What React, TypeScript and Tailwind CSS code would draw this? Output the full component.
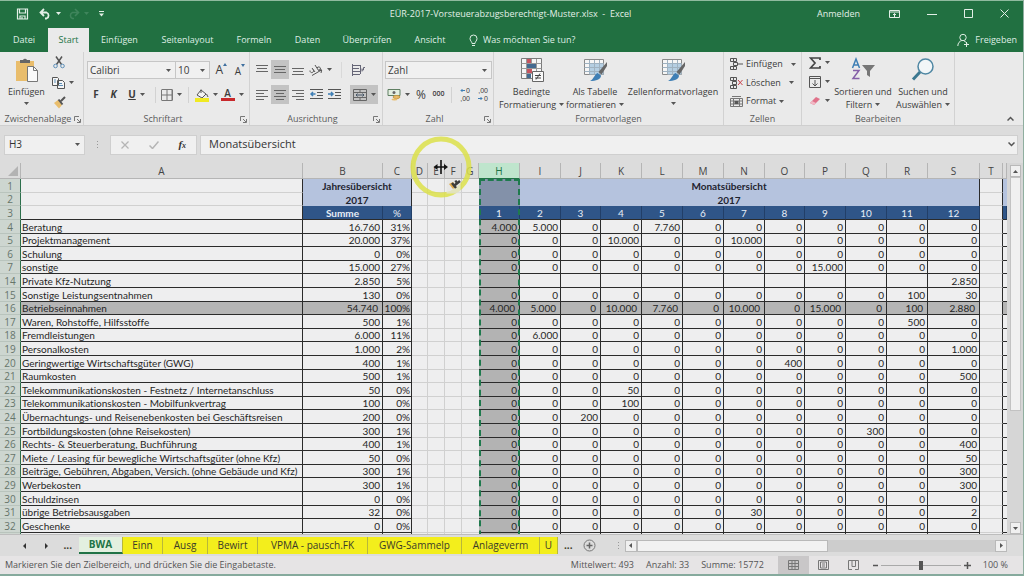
import React, { useState } from 'react';

interface SheetRow {
    no: number;
    label: string;
    sum: string;
    pct: string;
    months: string[];
}

const zeros = Array(12).fill('0');
const blanks = Array(12).fill('');

function months(values: Record<number, string>, base: string[] = zeros) {
    return base.map((v, i) => values[i + 1] ?? v);
}

const rows: SheetRow[] = [
    { no: 4, label: 'Beratung', sum: '16.760', pct: '31%', months: months({ 1: '4.000', 2: '5.000', 5: '7.760' }) },
    { no: 5, label: 'Projektmanagement', sum: '20.000', pct: '37%', months: months({ 4: '10.000', 7: '10.000' }) },
    { no: 6, label: 'Schulung', sum: '0', pct: '0%', months: zeros },
    { no: 7, label: 'sonstige', sum: '15.000', pct: '27%', months: months({ 9: '15.000' }) },
    { no: 14, label: 'Private Kfz-Nutzung', sum: '2.850', pct: '5%', months: months({ 12: '2.850' }, blanks) },
    { no: 15, label: 'Sonstige Leistungsentnahmen', sum: '130', pct: '0%', months: months({ 11: '100', 12: '30' }) },
    { no: 16, label: 'Betriebseinnahmen', sum: '54.740', pct: '100%', months: months({ 1: '4.000', 2: '5.000', 4: '10.000', 5: '7.760', 7: '10.000', 9: '15.000', 11: '100', 12: '2.880' }) },
    { no: 17, label: 'Waren, Rohstoffe, Hilfsstoffe', sum: '500', pct: '1%', months: months({ 11: '500' }) },
    { no: 18, label: 'Fremdleistungen', sum: '6.000', pct: '11%', months: months({ 2: '6.000' }) },
    { no: 19, label: 'Personalkosten', sum: '1.000', pct: '2%', months: months({ 12: '1.000' }) },
    { no: 20, label: 'Geringwertige Wirtschaftsgüter (GWG)', sum: '400', pct: '1%', months: months({ 8: '400' }) },
    { no: 21, label: 'Raumkosten', sum: '500', pct: '1%', months: months({ 12: '500' }) },
    { no: 22, label: 'Telekommunikationskosten - Festnetz / Internetanschluss', sum: '50', pct: '0%', months: months({ 4: '50' }) },
    { no: 23, label: 'Telekommunikationskosten - Mobilfunkvertrag', sum: '100', pct: '0%', months: months({ 4: '100' }) },
    { no: 24, label: 'Übernachtungs- und Reisenebenkosten bei Geschäftsreisen', sum: '200', pct: '0%', months: months({ 3: '200' }) },
    { no: 25, label: 'Fortbildungskosten (ohne Reisekosten)', sum: '300', pct: '1%', months: months({ 10: '300' }) },
    { no: 26, label: 'Rechts- & Steuerberatung, Buchführung', sum: '400', pct: '1%', months: months({ 12: '400' }) },
    { no: 27, label: 'Miete / Leasing für bewegliche Wirtschaftsgüter (ohne Kfz)', sum: '50', pct: '0%', months: months({ 12: '50' }) },
    { no: 28, label: 'Beiträge, Gebühren, Abgaben, Versich. (ohne Gebäude und Kfz)', sum: '300', pct: '1%', months: months({ 12: '300' }) },
    { no: 29, label: 'Werbekosten', sum: '300', pct: '1%', months: months({ 12: '300' }) },
    { no: 30, label: 'Schuldzinsen', sum: '0', pct: '0%', months: zeros },
    { no: 31, label: 'übrige Betriebsausgaben', sum: '32', pct: '0%', months: months({ 7: '30', 12: '2' }) },
    { no: 32, label: 'Geschenke', sum: '0', pct: '0%', months: zeros },
    { no: 33, label: '', sum: '', pct: '', months: blanks },
];

const columns = [
    { id: 'A', width: 'w-[282px]' },
    { id: 'B', width: 'w-[80px]' },
    { id: 'C', width: 'w-[29px]' },
    { id: 'D', width: 'w-[16px]' },
    { id: 'E', width: 'w-[17px]' },
    { id: 'F', width: 'w-[17px]' },
    { id: 'G', width: 'w-[17px]' },
    { id: 'H', width: 'w-[41px]' },
    { id: 'I', width: 'w-[41px]' },
    { id: 'J', width: 'w-[40px]' },
    { id: 'K', width: 'w-[41px]' },
    { id: 'L', width: 'w-[41px]' },
    { id: 'M', width: 'w-[41px]' },
    { id: 'N', width: 'w-[41px]' },
    { id: 'O', width: 'w-[40px]' },
    { id: 'P', width: 'w-[41px]' },
    { id: 'Q', width: 'w-[41px]' },
    { id: 'R', width: 'w-[41px]' },
    { id: 'S', width: 'w-[52px]' },
    { id: 'T', width: 'w-[23px]' },
    { id: '', width: 'w-[4px]' },
];

// 13.6px row pitch, kept on whole pixels
const rowHeight = (i: number) => (i % 5 === 1 || i % 5 === 4 ? 'h-[13px]' : 'h-[14px]');

const ribbonTabs = [
    { name: 'Datei', width: 'w-[48px]' },
    { name: 'Start', width: 'w-[41px]' },
    { name: 'Einfügen', width: 'w-[61px]' },
    { name: 'Seitenlayout', width: 'w-[75px]' },
    { name: 'Formeln', width: 'w-[58px]' },
    { name: 'Daten', width: 'w-[49px]' },
    { name: 'Überprüfen', width: 'w-[70px]' },
    { name: 'Ansicht', width: 'w-[56px]' },
];

const sheetTabs = [
    { name: 'BWA', width: 'w-[44px]' },
    { name: 'Einn', width: 'w-[40px]' },
    { name: 'Ausg', width: 'w-[45px]' },
    { name: 'Bewirt', width: 'w-[50px]' },
    { name: 'VPMA - pausch.FK', width: 'w-[110px]' },
    { name: 'GWG-Sammelp', width: 'w-[94px]' },
    { name: 'Anlageverm', width: 'w-[78px]' },
    { name: 'U', width: 'w-[18px]' },
];

function Caret({ className = 'text-[#555]' }: { className?: string }) {
    return (
        <svg viewBox="0 0 5 3" className={`w-[5px] h-[3px] shrink-0 ${className}`} fill="currentColor" aria-hidden="true">
            <path d="M0 0h5L2.5 3z" />
        </svg>
    );
}

function Icon({ w = 14, h = 14, children }: { w?: number, h?: number, children: React.ReactNode }) {
    return (
        <svg width={w} height={h} viewBox={`0 0 ${w} ${h}`} fill="none" stroke="#555" className="shrink-0" aria-hidden="true">
            {children}
        </svg>
    );
}

function Tool({ label, width, active, children }: { label: string, width: string, active?: boolean, children: React.ReactNode }) {
    return (
        <button aria-label={label} title={label} className={`flex items-center justify-center gap-1 h-[19px] shrink-0 ${width} ${active ? 'bg-[#c3c3c3]' : ''}`}>
            {children}
        </button>
    );
}

function Group({ label, width, launcher, children }: { label: string, width: string, launcher?: boolean, children: React.ReactNode }) {
    return (
        <section className={`flex flex-col shrink-0 border-r border-[#d2d2d2] ${width}`}>
            <div className="h-[61px] flex">{children}</div>
            <div className="h-3 flex items-center px-[2px]">
                <h2 className="flex-1 text-center text-[9px] leading-3 text-[#5a5a5a] whitespace-nowrap">{label}</h2>
                {launcher && (
                    <button aria-label={`${label} öffnen`}>
                        <Icon w={7} h={7}>
                            <path d="M.5 5V.5H5M3 3l3 3M6.500 3v3.500H3" stroke="#777" />
                        </Icon>
                    </button>
                )}
            </div>
        </section>
    );
}

function TitleBar() {
    return (
        <div className="h-7 flex items-center border-t border-[#8fbb9f] pb-[2px] text-[#e3efe7]">
            <div className="flex-1 flex items-center pl-[16px]">
                <button aria-label="Speichern">
                    <Icon w={13} h={12}>
                        <path d="M1.500 1h10v10h-10zM3.500 1v4h6V1M4 11V8h5v3M6 9v2" stroke="#e3efe7" strokeWidth="1.200" />
                    </Icon>
                </button>
                <button aria-label="Rückgängig" className="flex items-center gap-1 ml-[10px]">
                    <Icon w={13} h={12}>
                        <path d="M5 1L1.500 4.500 5 8M2 4.500h5.500a3.200 3.200 0 0 1 0 6H6" stroke="#e3efe7" strokeWidth="1.800" />
                    </Icon>
                    <Caret className="text-[#e3efe7]" />
                </button>
                <button aria-label="Wiederholen" className="flex items-center gap-1 ml-[6px]" disabled>
                    <Icon w={13} h={12}>
                        <path d="M8 1l3.500 3.500L8 8M11 4.500H5.500a3.200 3.200 0 0 0 0 6H7" stroke="#3f855c" strokeWidth="1.600" />
                    </Icon>
                    <Caret className="text-[#3f855c]" />
                </button>
                <button aria-label="Symbolleiste anpassen" className="ml-[10px]">
                    <Icon w={5} h={6}>
                        <path d="M0 .5h5" stroke="#e3efe7" />
                        <path d="M0 2.500h5L2.500 5.500z" fill="#e3efe7" stroke="none" />
                    </Icon>
                </button>
            </div>
            <h1 className="text-[9px] whitespace-pre pr-1">EÜR-2017-Vorsteuerabzugsberechtigt-Muster.xlsx  -  Excel</h1>
            <div className="flex-1 flex items-center justify-end gap-[27px] pr-[14px]">
                <button className="text-[9px] mr-[2px]">Anmelden</button>
                <button aria-label="Menüband-Anzeigeoptionen">
                    <Icon w={11} h={8}>
                        <path d="M.5.5h10v7H.5zM1 2h9M5.500 7V3.500M4 5l1.500-1.500L7 5" stroke="#e3efe7" />
                    </Icon>
                </button>
                <button aria-label="Minimieren">
                    <Icon w={10} h={8}>
                        <path d="M0 4.500h10" stroke="#e3efe7" />
                    </Icon>
                </button>
                <button aria-label="Maximieren">
                    <Icon w={9} h={9}>
                        <path d="M.5.5h8v8h-8z" stroke="#e3efe7" />
                    </Icon>
                </button>
                <button aria-label="Schließen">
                    <Icon w={9} h={9}>
                        <path d="M.5.5l8 8M8.500.5l-8 8" stroke="#e3efe7" />
                    </Icon>
                </button>
            </div>
        </div>
    );
}

function RibbonTabs() {
    return (
        <nav className="h-6 flex items-stretch text-[9px] text-[#dfeee4]">
            {ribbonTabs.map(t => (
                <button key={t.name} className={`${t.width} shrink-0 text-center whitespace-nowrap ${t.name === 'Start' ? 'bg-[#eaeaea] text-[#217346]' : ''}`}>
                    {t.name}
                </button>
            ))}
            <label className="flex items-center gap-[5px] flex-1 pl-[11px]">
                <Icon w={9} h={13}>
                    <path d="M3 9.500C3 7.500 1 7 1 4.500a3.500 3.500 0 0 1 7 0C8 7 6 7.500 6 9.500zM3 11.500h3" stroke="#dfeee4" />
                </Icon>
                <input type="text" placeholder="Was möchten Sie tun?" aria-label="Was möchten Sie tun?" className="w-40 bg-transparent outline-none placeholder:text-[#dfeee4]" />
            </label>
            <button className="flex items-center gap-[6px] pr-[6px] whitespace-nowrap">
                <Icon w={12} h={14}>
                    <circle cx="6" cy="4.500" r="3.200" stroke="#dfeee4" />
                    <path d="M.8 13c0-3 2-5 4-5.500M7 8c1.500.5 2.500 1.500 3 2.500M7 11.500h5M9.500 9v5" stroke="#dfeee4" />
                </Icon>
                Freigeben
            </button>
        </nav>
    );
}

function AlignIcon({ d }: { d: string }) {
    return (
        <Icon w={12} h={11}>
            <path d={d} stroke="#666" />
        </Icon>
    );
}

function BrushOnTable() {
    return (
        <Icon w={26} h={26}>
            <path d="M2.500 2.500h19v15h-19z" fill="#f6f6f6" stroke="#8a8a8a" />
            <path d="M7.500 6.500h14v11h-14z" fill="#b5cfe3" stroke="none" />
            <path d="M2.500 6.500h19M2.500 10.500h19M2.500 14.500h19M7.500 3v14M12.500 3v14M17.500 3v14" stroke="#9fb2c1" />
            <path d="M25 5l-8.500 10 3 2.500L25 9z" fill="#666" stroke="none" />
            <path d="M15.500 16l3.500 2.500c0 4-5 5.500-11 5.500 4-2 4-6 7.500-8z" fill="#3f7fb5" stroke="none" />
        </Icon>
    );
}

function Ribbon() {
    return (
        <div className="h-[74px] flex bg-[#eaeaea] text-[9px] text-[#3c3c3c] border-b border-[#cfcfcf]">
            <Group label="Zwischenablage" width="w-[84px]" launcher>
                <button className="w-[53px] flex flex-col items-center pt-[5px]">
                    <Icon w={24} h={26}>
                        <path d="M1 4h18v20H1z" fill="#e9bd6c" stroke="none" />
                        <path d="M5 6V3h3a2.200 2.200 0 0 1 4 0h3v3z" fill="#666" stroke="none" />
                        <path d="M12.500 9.500h6l4 4v11h-10z" fill="#fafafa" stroke="#777" />
                        <path d="M18.500 9.500v4h4" stroke="#777" />
                    </Icon>
                    <span className="leading-[13px] mt-[2px]">Einfügen</span>
                    <span className="mt-1"><Caret /></span>
                </button>
                <div className="flex flex-col gap-[1px] pt-[1px]">
                    <Tool label="Ausschneiden" width="w-[11px]">
                        <Icon w={12} h={13}>
                            <path d="M3 .5l5.500 8M9 .5l-5.500 8" strokeWidth="1.500" />
                            <circle cx="2.500" cy="10" r="1.800" stroke="#5d8fb8" />
                            <circle cx="9.500" cy="10" r="1.800" stroke="#5d8fb8" />
                        </Icon>
                    </Tool>
                    <Tool label="Kopieren" width="w-[20px]">
                        <Icon w={13} h={12}>
                            <path d="M.5.5h5l1 1v7h-6zM5.500 3.500h5l2 2v6h-7z" fill="#f5f5f5" />
                            <path d="M2 3h2M2 5h2M7 6.500h3M7 8.500h4" stroke="#5d8fb8" />
                        </Icon>
                        <Caret />
                    </Tool>
                    <Tool label="Format übertragen" width="w-[12px]">
                        <Icon w={13} h={13}>
                            <path d="M1 7l4-3 4 5-3 3.500z" fill="#e9bd6c" stroke="none" />
                            <path d="M5.500 3.500l4 5M8 5l4-4" strokeWidth="2" />
                        </Icon>
                    </Tool>
                </div>
            </Group>

            <Group label="Schriftart" width="w-[166px]" launcher>
                <div className="flex flex-col flex-1 pl-[3px] pt-[9px]">
                    <div className="flex h-[18px]">
                        <button aria-label="Schriftart" className="w-[89px] flex items-center justify-between border border-[#c6c6c6] bg-[#f0f0f0] pl-[2px] pr-1 text-[10px]">
                            Calibri <Caret />
                        </button>
                        <button aria-label="Schriftgrad" className="w-[34px] flex items-center justify-between border border-l-0 border-[#c6c6c6] bg-[#f0f0f0] pl-[2px] pr-1 text-[10px]">
                            10 <Caret />
                        </button>
                        <button aria-label="Schrift vergrößern" className="w-[17px] flex justify-end text-[12px] leading-[18px]">
                            A
                            <Icon w={4} h={8}><path d="M0 5l2-3 2 3z" fill="#3f6f9f" stroke="none" /></Icon>
                        </button>
                        <button aria-label="Schrift verkleinern" className="w-[18px] flex justify-end text-[10px] leading-[20px]">
                            A
                            <Icon w={4} h={8}><path d="M0 3h4L2 6z" fill="#3f6f9f" stroke="none" /></Icon>
                        </button>
                    </div>
                    <div className="flex items-center mt-[6px]">
                        <Tool label="Fett" width="w-[18px]"><b className="text-[10px]">F</b></Tool>
                        <Tool label="Kursiv" width="w-[17px]"><b className="text-[10px] italic">K</b></Tool>
                        <Tool label="Unterstrichen" width="w-[29px]"><b className="text-[10px] underline">U</b><Caret /></Tool>
                        <span className="w-px h-4 bg-[#d2d2d2] ml-1" />
                        <Tool label="Rahmen" width="w-[30px]">
                            <Icon w={12} h={12}>
                                <path d="M1 .5h10v11H1M.5.5v11M11.500.5v11M6 1v10M1 6h10" stroke="#777" />
                            </Icon>
                            <Caret />
                        </Tool>
                        <span className="w-px h-4 bg-[#d2d2d2] ml-[2px] mr-1" />
                        <Tool label="Füllfarbe" width="w-[26px]">
                            <Icon w={14} h={14}>
                                <path d="M6 2l5 4-4 4-5-3z" fill="#f3f3f3" />
                                <path d="M6 5V1.500M11.500 6l1.500 3" />
                                <path d="M0 10h14v4H0z" fill="#f0ea23" stroke="none" />
                            </Icon>
                            <Caret />
                        </Tool>
                        <Tool label="Schriftfarbe" width="w-[26px]">
                            <span className="w-[14px] flex flex-col items-center border-b-3 border-[#c8282b] text-[10px] leading-[10px] font-semibold">A</span>
                            <Caret />
                        </Tool>
                    </div>
                </div>
            </Group>

            <Group label="Ausrichtung" width="w-[133px]" launcher>
                <div className="flex flex-col flex-1 pl-[3px] pt-[8px]">
                    <div className="flex items-center">
                        <Tool label="Oben" width="w-[18px]"><AlignIcon d="M0 1.500h12M1 4.500h10M0 7.500h12" /></Tool>
                        <Tool label="Mitte" width="w-[18px]" active><AlignIcon d="M0 2.500h12M1 5.500h10M0 8.500h12" /></Tool>
                        <Tool label="Unten" width="w-[17px]"><AlignIcon d="M0 4.500h12M1 7.500h10M0 10.500h12" /></Tool>
                        <Tool label="Drehen" width="w-[28px]">
                            <Icon w={14} h={12}>
                                <path d="M1 6.500a1.800 1.800 0 1 0 3-1M3 4l3 4M6 1l3.500 5.500M8 4a1.800 1.800 0 1 1 1.500 2.500M3 11.500l9.500-5.500M9.500 6h3.200L12 9" />
                            </Icon>
                            <Caret />
                        </Tool>
                        <span className="w-px h-4 bg-[#d9d9d9] ml-[7px] mr-[6px]" />
                        <Tool label="Textumbruch" width="w-[20px]">
                            <Icon w={13} h={12}>
                                <path d="M.5 0v12M1 1.500h8M1 4.500h6M1 7.500h8M1 10.500h7M8.500 1v9M10 6h1.500V3.500H13M10 4.500v3" stroke="#667" />
                            </Icon>
                        </Tool>
                    </div>
                    <div className="flex items-center mt-[6px]">
                        <Tool label="Linksbündig" width="w-[18px]"><AlignIcon d="M0 1.500h12M0 4.500h8M0 7.500h12M0 10.500h8" /></Tool>
                        <Tool label="Zentriert" width="w-[18px]" active><AlignIcon d="M0 1.500h12M2 4.500h8M0 7.500h12M2 10.500h8" /></Tool>
                        <Tool label="Rechtsbündig" width="w-[17px]"><AlignIcon d="M0 1.500h12M4 4.500h8M0 7.500h12M4 10.500h8" /></Tool>
                        <Tool label="Einzug verkleinern" width="w-[20px]">
                            <Icon w={13} h={11}>
                                <path d="M0 .5h13M7 3.500h6M7 6.500h6M0 9.500h13" />
                                <path d="M5.500 5H1M3 3L1 5l2 2" stroke="#3f7fb5" strokeWidth="1.500" />
                            </Icon>
                        </Tool>
                        <Tool label="Einzug vergrößern" width="w-[17px]">
                            <Icon w={13} h={11}>
                                <path d="M0 .5h13M7 3.500h6M7 6.500h6M0 9.500h13" />
                                <path d="M0 5h5M3 3l2 2-2 2" stroke="#3f7fb5" strokeWidth="1.500" />
                            </Icon>
                        </Tool>
                        <span className="w-[7px]" />
                        <Tool label="Verbinden und zentrieren" width="w-[28px]" active>
                            <Icon w={14} h={12}>
                                <path d="M.5.5h13v11H.5zM1 3.500h12M1 8.500h12M7 1v2M7 9v2" stroke="#666" />
                                <path d="M3 6h8M4.500 4.500L3 6l1.500 1.500M9.500 4.500L11 6 9.500 7.500" stroke="#456" />
                            </Icon>
                            <Caret />
                        </Tool>
                    </div>
                </div>
            </Group>

            <Group label="Zahl" width="w-[111px]" launcher>
                <div className="flex flex-col flex-1 px-[2px] pt-[9px]">
                    <button aria-label="Zahlenformat" className="h-[18px] flex items-center justify-between border border-[#c6c6c6] bg-[#f0f0f0] pl-[2px] pr-1 text-[10px]">
                        Zahl <Caret />
                    </button>
                    <div className="flex items-center mt-[6px]">
                        <Tool label="Buchhaltungsformat" width="w-[27px]">
                            <Icon w={14} h={13}>
                                <path d="M1 1.500h12v6H1z" fill="#e3efe0" stroke="#5f7f62" />
                                <circle cx="7" cy="4.500" r="1.500" fill="#666" stroke="none" />
                                <ellipse cx="9.500" cy="9" rx="3.500" ry="1.500" fill="#e9bd6c" stroke="#c79a44" />
                                <ellipse cx="7.500" cy="11.500" rx="3" ry="1" fill="#e9bd6c" stroke="none" />
                            </Icon>
                            <Caret />
                        </Tool>
                        <Tool label="Prozent" width="w-[18px]"><span className="text-[12px]">%</span></Tool>
                        <Tool label="Tausender" width="w-[17px]"><span className="text-[7px] font-semibold">000</span></Tool>
                        <span className="w-px h-4 bg-[#d2d2d2] mx-1" />
                        <Tool label="Dezimalstelle hinzufügen" width="w-[18px]">
                            <span className="flex flex-col items-end text-[7px] leading-2 font-['Liberation_Sans',sans-serif]">
                                <span className="flex items-center gap-px">
                                    <Icon w={5} h={5}><path d="M5 2.500H1M2.500 1L1 2.500 2.500 4" stroke="#3f7fb5" /></Icon>
                                    0
                                </span>
                                <span>,00</span>
                            </span>
                        </Tool>
                        <Tool label="Dezimalstelle entfernen" width="w-[18px]">
                            <span className="flex flex-col items-end text-[7px] leading-2 font-['Liberation_Sans',sans-serif]">
                                <span>,00</span>
                                <span className="flex items-center gap-px">
                                    <Icon w={5} h={5}><path d="M0 2.500h4M2.500 1L4 2.500 2.500 4" stroke="#3f7fb5" /></Icon>
                                    0
                                </span>
                            </span>
                        </Tool>
                    </div>
                </div>
            </Group>

            <Group label="Formatvorlagen" width="w-[230px]">
                <button className="w-[70px] flex flex-col items-center pt-[5px] pl-[5px] whitespace-nowrap">
                    <Icon w={26} h={26}>
                        <path d="M2.500 1.500h20v20h-20z" fill="#f6f6f6" stroke="#7a7a7a" />
                        <path d="M8 2h5v4H8zM8 11h5v5H8z" fill="#c55560" stroke="none" />
                        <path d="M8 6h10v5H8zM8 16h4v5H8z" fill="#44698f" stroke="none" />
                        <path d="M2.500 6.500h20M2.500 11.500h20M2.500 16.500h20M7.500 2v19M12.500 2v5M17.500 2v19" stroke="#999" />
                        <path d="M13.500 14.500h11v10h-11z" fill="#fafafa" stroke="#666" />
                        <path d="M16 18.500h6M16 21h6M21 16.500l-4 6" stroke="#444" />
                    </Icon>
                    <span className="leading-[13px] mt-[2px]">Bedingte</span>
                    <span className="leading-[13px] flex items-center gap-[3px]">Formatierung <Caret /></span>
                </button>
                <button className="w-[62px] flex flex-col items-center pt-[5px] whitespace-nowrap">
                    <BrushOnTable />
                    <span className="leading-[13px] mt-[2px]">Als Tabelle</span>
                    <span className="leading-[13px] flex items-center gap-[3px]">formatieren <Caret /></span>
                </button>
                <button className="w-[94px] flex flex-col items-center pt-[5px] whitespace-nowrap">
                    <BrushOnTable />
                    <span className="leading-[13px] mt-[2px]">Zellenformatvorlagen</span>
                    <span className="mt-1"><Caret /></span>
                </button>
            </Group>

            <Group label="Zellen" width="w-[78px]">
                <div className="flex flex-col pl-[6px] pt-[3px] whitespace-nowrap">
                    <button className="h-[18px] flex items-center gap-[3px]">
                        <Icon w={13} h={12}>
                            <path d="M.5.5h6v3h-6zM.5 8.500h6v3h-6zM3.500.5v3M3.500 8.500v3M3.500 4.500h4v3h-4zM8 6h5" />
                        </Icon>
                        Einfügen <span className="ml-[5px]"><Caret /></span>
                    </button>
                    <button className="h-[19px] flex items-center gap-[3px]">
                        <Icon w={13} h={12}>
                            <path d="M.5.5h6v3h-6zM.5 8.500h6v3h-6zM3.500.5v3M3.500 8.500v3M2.500 4.500h4v3h-4z" />
                            <path d="M8 3l4.500 5M12.500 3L8 8" stroke="#c8414b" />
                        </Icon>
                        Löschen <span className="ml-[5px]"><Caret /></span>
                    </button>
                    <button className="h-[18px] flex items-center gap-[3px]">
                        <Icon w={13} h={12}>
                            <path d="M.5 3.500h12v8H.5zM1 6h11M1 9h11M3.500 4v7M9.500 4v7M2 1.500h9" stroke="#777" />
                            <path d="M4.500 6h4v3h-4z" fill="#555" stroke="none" />
                        </Icon>
                        Format <Caret />
                    </button>
                </div>
            </Group>

            <Group label="Bearbeiten" width="w-[153px]">
                <div className="flex flex-col pl-[5px] pt-[1px]">
                    <Tool label="Summe" width="w-[24px]">
                        <Icon w={12} h={12}>
                            <path d="M11 3V1H1.500L6 6l-4.500 5H11V9" strokeWidth="1.700" stroke="#444" />
                        </Icon>
                        <Caret />
                    </Tool>
                    <Tool label="Ausfüllen" width="w-[24px]">
                        <Icon w={12} h={12}>
                            <path d="M.5.5h11v11H.5zM1 2.500h10M6 4v6M3.500 7.500L6 10l2.500-2.500" />
                        </Icon>
                        <Caret />
                    </Tool>
                    <Tool label="Löschen" width="w-[24px]">
                        <Icon w={12} h={10}>
                            <path d="M1 7l6-6 4 2-6 6z" fill="#e0728a" stroke="none" />
                            <path d="M1 7l2-2 4 2-2 2z" fill="#f1b9c5" stroke="none" />
                        </Icon>
                        <Caret />
                    </Tool>
                </div>
                <button className="w-[64px] flex flex-col items-center pt-[5px] whitespace-nowrap">
                    <Icon w={24} h={26}>
                        <path d="M1.500 11L5 2l3.500 9M2.500 8h5" stroke="#3f7fb5" strokeWidth="1.500" />
                        <path d="M2 13.500h6l-6 8h6.500" stroke="#8560a8" strokeWidth="1.500" />
                        <path d="M11 8h13l-5 6v6l-3-2v-4z" fill="#777" stroke="none" />
                    </Icon>
                    <span className="leading-[13px] mt-[2px]">Sortieren und</span>
                    <span className="leading-[13px] flex items-center gap-[3px]">Filtern <Caret /></span>
                </button>
                <button className="w-[56px] flex flex-col items-center pt-[5px] whitespace-nowrap">
                    <Icon w={24} h={26}>
                        <circle cx="14.500" cy="9.500" r="7.500" stroke="#4f87a3" strokeWidth="1.500" fill="#f2f6f8" />
                        <path d="M9 15l-7 7.500" stroke="#3c7890" strokeWidth="3" />
                    </Icon>
                    <span className="leading-[13px] mt-[2px]">Suchen und</span>
                    <span className="leading-[13px] flex items-center gap-[3px]">Auswählen <Caret /></span>
                </button>
            </Group>
            <div className="flex-1 flex items-end justify-end pr-[9px] pb-1">
                <button aria-label="Menüband reduzieren">
                    <Icon w={7} h={5}><path d="M.5 4.500l3-3 3 3" strokeWidth="1.500" /></Icon>
                </button>
            </div>
        </div>
    );
}

function FormulaBar({ value, onChange }: { value: string, onChange: (v: string) => void }) {
    return (
        <div className="h-[37px] flex items-center bg-[#dcdcdc] pl-[4px] pr-[5px] text-[#333]">
            <button aria-label="Namenfeld" className="w-[81px] h-5 flex items-center justify-between bg-[#f0f0f0] border border-[#cfcfcf] px-1 text-[10px]">
                H3 <Caret />
            </button>
            <div className="w-[25px] flex flex-col items-center gap-[2px]">
                <span className="size-px bg-[#999]" />
                <span className="size-px bg-[#999]" />
                <span className="size-px bg-[#999]" />
            </div>
            <div className="w-[87px] h-5 flex items-center justify-around bg-[#f0f0f0] border border-[#cfcfcf]">
                <button aria-label="Abbrechen"><Icon w={8} h={8}><path d="M.5.5l7 7M7.500.5l-7 7" stroke="#b5b5b5" strokeWidth="1.300" /></Icon></button>
                <button aria-label="Eingeben"><Icon w={10} h={8}><path d="M.5 4.500L3.500 7.500l6-7" stroke="#b5b5b5" strokeWidth="1.500" /></Icon></button>
                <button aria-label="Funktion einfügen" className="font-['Liberation_Serif',serif] italic font-bold text-[11px]">f<span className="text-[8px]">x</span></button>
            </div>
            <div className="flex-1 h-5 ml-[3px] flex items-center bg-[#f0f0f0] border border-[#cfcfcf] pl-2 pr-[2px]">
                <input type="text" aria-label="Bearbeitungsleiste" value={value} onChange={e => onChange(e.target.value)} className="flex-1 bg-transparent text-[11px] outline-none" />
                <button aria-label="Erweitern"><Icon w={7} h={5}><path d="M.5.5l3 3 3-3" strokeWidth="1.500" /></Icon></button>
            </div>
        </div>
    );
}

function RowHeader({ no }: { no: number | string }) {
    return (
        <th scope="row" className="bg-[#cdd6d0] border-b border-[#b9c4bd] border-r border-r-[#2c6e4b] font-['Open_Sans',sans-serif] font-normal text-[#66756b] text-center">{no}</th>
    );
}

function EmptyCells() {
    return (
        <>
            <td className="border-r border-b border-[#d0d0d0]" />
            <td className="border-r border-b border-[#d0d0d0]" />
            <td className="border-r border-b border-[#d0d0d0]" />
            <td className="border-b border-[#d0d0d0]" />
        </>
    );
}

function DataRow({ row, height }: { row: SheetRow, height: string }) {
    const total = row.no === 16;
    const cell = 'border-r border-b border-[#2b2b2b]';
    const fill = total ? 'bg-[#b5b5b5]' : '';

    return (
        <tr className={height}>
            <RowHeader no={row.no === 33 ? '' : row.no} />
            <td className={`${cell} ${fill} pl-px`}>{row.label}</td>
            <td className={`${cell} ${fill} text-right ${total ? 'pr-1' : 'pr-[2px]'}`}>{row.sum}</td>
            <td className={`${cell} ${fill} text-right pr-px`}>{row.pct}</td>
            <EmptyCells />
            {row.months.map((m, i) => (
                <td key={i} className={`${cell} text-right ${total ? 'pr-1' : 'pr-[2px]'} ${i === 0 ? (total ? 'bg-[#9c9c9c]' : 'bg-[#b3b3b3]') : fill}`}>{m}</td>
            ))}
            <td className="border-r border-b border-[#d0d0d0] border-r-[#2b2b2b]" />
            <td className={`border-b border-[#2b2b2b] ${fill}`} />
        </tr>
    );
}

function Sheet() {
    const band = 'bg-[#b5c3de] font-bold text-center text-[#1f2430]';
    const head = 'bg-[#2f5588] text-[#e8eef6] text-center border-b border-[#2b2b2b] border-r border-r-[#223f68]';

    return (
        <div className="relative flex-1 min-h-0 flex">
            <div className="flex-1 min-w-0 overflow-hidden">
                <table className="w-full table-fixed border-separate border-spacing-0 bg-[#eeeeef] font-['Lato',sans-serif] [font-variant-ligatures:none] text-[10px] leading-[12px] text-[#262626] whitespace-nowrap">
                    <colgroup>
                        <col className="w-[21px]" />
                        {columns.map(c => <col key={c.id} className={c.width} />)}
                    </colgroup>
                    <thead>
                        <tr className="h-4 bg-[#dcdcdc] text-[10px] text-[#444] font-['Open_Sans',sans-serif]">
                            <th className="border-b border-r border-[#b5b5b5]">
                                <svg viewBox="0 0 10 10" className="size-[10px] ml-auto mr-[2px]" fill="#b3b3b3" aria-hidden="true"><path d="M10 0v10H0z" /></svg>
                            </th>
                            {columns.map(c => (
                                <th key={c.id} scope="col" className={`font-normal border-b border-r border-[#b5b5b5] ${c.id === 'H' ? 'bg-[#bfe5cd] text-[#217346] border-b-[#217346]' : ''}`}>{c.id}</th>
                            ))}
                        </tr>
                    </thead>
                    <tbody>
                        <tr className={rowHeight(0)}>
                            <RowHeader no={1} />
                            <td className="border-b border-[#d0d0d0] border-r border-r-[#2b2b2b]" />
                            <td colSpan={2} className={`${band} border-r border-[#2b2b2b]`}>Jahresübersicht</td>
                            <EmptyCells />
                            <td className="relative bg-[#8391a9]">
                                <span className="absolute inset-x-0 top-0 h-[1000px] border-2 border-dashed border-[#1f7a4d]" />
                            </td>
                            <td colSpan={11} className={`${band} border-r border-[#2b2b2b] pr-[41px]`}>Monatsübersicht</td>
                            <td className="border-b border-[#d0d0d0] border-r border-r-[#2b2b2b]" />
                            <td className="bg-[#b5c3de]" />
                        </tr>
                        <tr className={rowHeight(1)}>
                            <RowHeader no={2} />
                            <td className="border-b border-[#d0d0d0] border-r border-r-[#2b2b2b]" />
                            <td colSpan={2} className={`${band} border-r border-[#2b2b2b]`}>2017</td>
                            <EmptyCells />
                            <td className="bg-[#8391a9]" />
                            <td colSpan={11} className={`${band} border-r border-[#2b2b2b] pr-[41px]`}>2017</td>
                            <td className="border-b border-[#d0d0d0] border-r border-r-[#2b2b2b]" />
                            <td className="bg-[#b5c3de]" />
                        </tr>
                        <tr className={rowHeight(2)}>
                            <RowHeader no={3} />
                            <td className="border-b border-r border-[#2b2b2b]" />
                            <td className={`${head} font-bold`}>Summe</td>
                            <td className={head}>%</td>
                            <EmptyCells />
                            {zeros.map((_, i) => <td key={i} className={head}>{i + 1}</td>)}
                            <td className="border-b border-[#d0d0d0] border-r border-r-[#2b2b2b]" />
                            <td className={head} />
                        </tr>
                        {rows.map((r, i) => <DataRow key={r.no} row={r} height={rowHeight(i + 3)} />)}
                    </tbody>
                </table>
            </div>
            <div className="w-4 flex flex-col items-center bg-[#d6d6d6]">
                <button aria-label="Nach oben" className="w-[11px] h-3 mt-[2px] flex items-center justify-center bg-[#f0f0f0] border border-[#b9b9b9]">
                    <svg viewBox="0 0 5 3" className="w-[5px] h-[3px]" fill="#555" aria-hidden="true"><path d="M0 3h5L2.500 0z" /></svg>
                </button>
                <div className="w-[11px] h-[234px] bg-[#f0f0f0] border border-[#c2c2c2]" />
                <button aria-label="Nach unten" className="w-[11px] h-3 mt-auto flex items-center justify-center bg-[#f0f0f0] border border-[#b9b9b9]">
                    <Caret />
                </button>
            </div>

            {/* pointer highlight with the column resize cursor */}
            <svg viewBox="0 0 64 64" className="absolute left-[410px] top-[-28px] size-16 pointer-events-none" fill="none" aria-hidden="true">
                <circle cx="31" cy="32" r="28" stroke="#dce04a" strokeOpacity="0.850" strokeWidth="5" />
                <path d="M31 25v14M25 32h11" stroke="#111" strokeWidth="1.600" />
                <path d="M23.500 32l4-3v6zM38 32l-4-3v6z" fill="#111" />
                <path d="M36.500 44.500h14v14h-14z" fill="#e4e4e2" fillOpacity="0.700" />
                <path d="M39 49l4-2 3 4-3 3z" fill="#e0a94a" />
                <path d="M42 48l4 5M45 50l5-4M45 47l2-1" stroke="#3d3d3d" strokeWidth="2.500" />
            </svg>
        </div>
    );
}

function SheetTabs({ active, onSelect }: { active: string, onSelect: (name: string) => void }) {
    return (
        <div className="h-[22px] flex items-center bg-[#dcdcdc] border-t border-[#bdbdbd] text-[10px] text-[#3a3a2a]">
            <div className="w-[79px] flex items-center justify-end gap-[19px] pr-[7px] shrink-0">
                <button aria-label="Vorheriges Blatt"><Icon w={3} h={6}><path d="M3 0v6L0 3z" fill="#333" stroke="none" /></Icon></button>
                <button aria-label="Nächstes Blatt"><Icon w={3} h={6}><path d="M0 0v6l3-3z" fill="#333" stroke="none" /></Icon></button>
                <span className="font-bold -ml-1">...</span>
            </div>
            {sheetTabs.map(t => (
                <button
                    key={t.name}
                    onClick={() => onSelect(t.name)}
                    className={`${t.width} h-[17px] shrink-0 whitespace-nowrap border-r border-[#b8b83a] ${t.name === active ? 'bg-[#e3f0e0] font-bold text-[#217346] border-b-2 border-b-[#217346]' : 'bg-[#f3ee1c]'}`}
                >
                    {t.name}
                </button>
            ))}
            <span className="ml-[6px] font-bold">...</span>
            <button aria-label="Neues Blatt" className="ml-[10px]">
                <Icon w={13} h={13}>
                    <circle cx="6.500" cy="6.500" r="5.500" stroke="#777" />
                    <path d="M3.500 6.500h6M6.500 3.500v6" stroke="#666" strokeWidth="1.500" />
                </Icon>
            </button>
            <div className="w-[29px] flex flex-col items-center gap-[2px] pl-4">
                <span className="size-px bg-[#999]" />
                <span className="size-px bg-[#999]" />
                <span className="size-px bg-[#999]" />
            </div>
            <div className="flex-1 flex items-center h-3 mr-[16px] bg-[#cdcdcd]">
                <button aria-label="Nach links" className="w-3 h-3 flex items-center justify-center bg-[#f0f0f0] border border-[#b9b9b9]">
                    <Icon w={3} h={5}><path d="M3 0v5L0 2.500z" fill="#555" stroke="none" /></Icon>
                </button>
                <div className="w-1/2 h-3 bg-[#f2f2f2] border border-[#b9b9b9]" />
                <button aria-label="Nach rechts" className="w-3 h-3 ml-auto flex items-center justify-center bg-[#f0f0f0] border border-[#b9b9b9]">
                    <Icon w={3} h={5}><path d="M0 0v5l3-2.500z" fill="#555" stroke="none" /></Icon>
                </button>
            </div>
        </div>
    );
}

function StatusBar() {
    const [zoom, setZoom] = useState(50);

    return (
        <footer className="h-5 flex items-center bg-[#e6e4e5] border-b-2 border-[#86aa9d] pl-[5px] pr-[15px] text-[9px] text-[#555] whitespace-nowrap">
            <span>Markieren Sie den Zielbereich, und drücken Sie die Eingabetaste.</span>
            <div className="ml-auto flex items-center h-full">
                <span>Mittelwert: 493</span>
                <span className="ml-3">Anzahl: 33</span>
                <span className="ml-3">Summe: 15772</span>
                <button aria-label="Normalansicht" className="ml-[14px] w-[31px] h-full flex items-center justify-center bg-[#c9c7c8]">
                    <Icon w={11} h={10}><path d="M.5.5h10v9H.5zM1 3.500h9M1 6.500h9M4 1v8M7 1v8" stroke="#777" /></Icon>
                </button>
                <button aria-label="Seitenlayout" className="w-[30px] flex items-center justify-center">
                    <Icon w={11} h={10}><path d="M.5.5h10v9H.5zM2.500 2h6v6h-6zM4 4h3M4 6h3" stroke="#777" /></Icon>
                </button>
                <button aria-label="Umbruchvorschau" className="w-[30px] flex items-center justify-center">
                    <Icon w={11} h={10}><path d="M.5 9.500V.5h10v9H7M4 1v5.500h3.500V1M.5 9.500H4" stroke="#777" /></Icon>
                </button>
                <button aria-label="Verkleinern" className="ml-1"><Icon w={5} h={5}><path d="M0 2.500h5" strokeWidth="1.500" /></Icon></button>
                <input
                    type="range"
                    aria-label="Zoom"
                    value={zoom}
                    onChange={e => setZoom(Number(e.target.value))}
                    className="w-[80px] h-3 mx-[3px] appearance-none bg-transparent [&::-webkit-slider-runnable-track]:h-px [&::-webkit-slider-runnable-track]:bg-[#a9a9a9] [&::-webkit-slider-thumb]:appearance-none [&::-webkit-slider-thumb]:w-1 [&::-webkit-slider-thumb]:h-[9px] [&::-webkit-slider-thumb]:-mt-1 [&::-webkit-slider-thumb]:bg-[#555]"
                />
                <button aria-label="Vergrößern"><Icon w={7} h={7}><path d="M0 3.500h7M3.500 0v7" strokeWidth="1.500" /></Icon></button>
                <span className="ml-3">100 %</span>
            </div>
        </footer>
    );
}

export default function App() {
    const [formula, setFormula] = useState('Monatsübersicht');
    const [tab, setTab] = useState('BWA');

    return (
        <div className="h-screen flex flex-col overflow-hidden border-r border-[#8fae9f] bg-[#dcdcdc] font-['Open_Sans','Noto_Sans',sans-serif]">
            <header className="bg-[#217041]">
                <TitleBar />
                <RibbonTabs />
            </header>
            <Ribbon />
            <FormulaBar value={formula} onChange={setFormula} />
            <Sheet />
            <SheetTabs active={tab} onSelect={setTab} />
            <StatusBar />
        </div>
    );
}
